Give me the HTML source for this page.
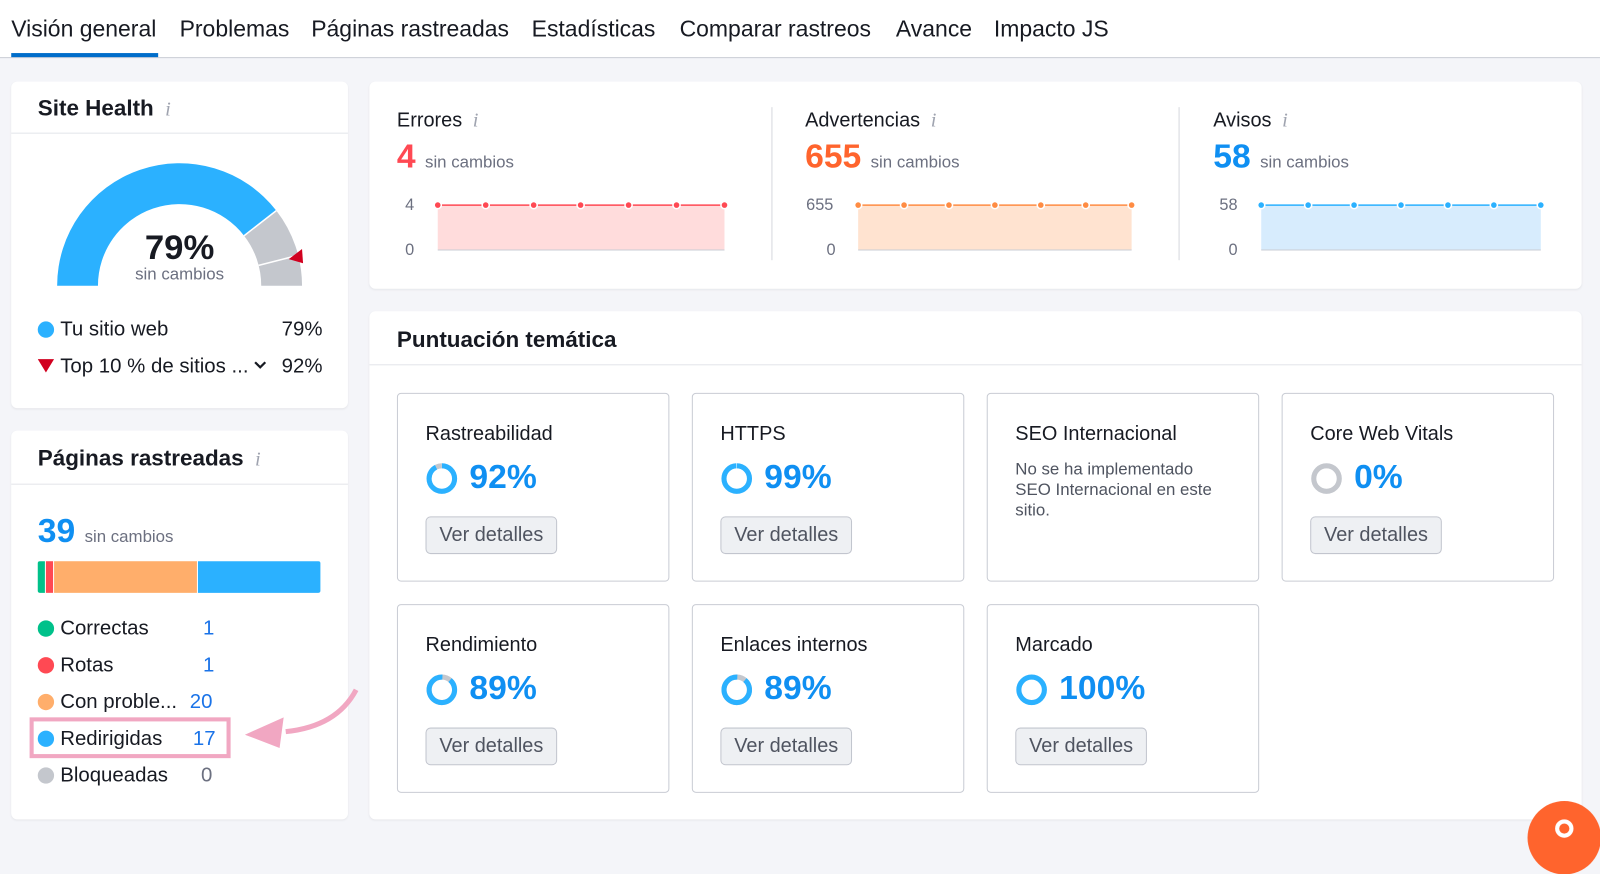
<!DOCTYPE html>
<html><head><meta charset="utf-8"><style>
*{box-sizing:border-box;margin:0;padding:0}
body{width:1600px;height:830px;background:#f4f5f9;font-family:"Liberation Sans",sans-serif;color:#171a22;position:relative;overflow:hidden}
#w{position:absolute;left:0;top:0;width:1568px;height:814px;transform:scale(1.0204);transform-origin:0 0}
.nav{position:absolute;left:0;top:0;width:1568px;height:57px;background:#fff;border-bottom:1px solid #c9ccd4}
.nav span{position:absolute;top:16px;font-size:22.5px;color:#171a22}
.card{position:absolute;background:#fff;border-radius:6px;box-shadow:0 1px 2px rgba(0,0,0,.06)}
.abs{position:absolute}
.h{font-weight:bold;font-size:22px}
.i{font-family:"Liberation Serif",serif;font-style:italic;color:#a0a4b0;font-size:20px;font-weight:normal}
.dot{position:absolute;width:16px;height:16px;border-radius:50%}
.lg{position:absolute;font-size:20px}
.num{position:absolute;font-size:20px;color:#1a73e8}
.tile{position:absolute;width:267px;height:185px;border:1.5px solid #c9ccd4;border-radius:4px}
.tile .t{position:absolute;left:27px;top:28px;font-size:19.5px}
.tile .p{position:absolute;left:70px;top:62px;font-size:33px;font-weight:bold;color:#0f8ff2}
.tile svg{position:absolute;left:27px;top:67px}
.btn{position:absolute;left:27px;top:120px;width:129px;height:37px;border:1px solid #c2c5ce;border-radius:5px;background:#eef0f3;font-size:19.5px;color:#4f5460;text-align:center;line-height:35px}
.sm{font-size:16.5px;color:#6c7080}
</style></head><body><div id="w">
<div class="nav">
<span style="left:11px">Visión general</span>
<span style="left:176px">Problemas</span>
<span style="left:305px">Páginas rastreadas</span>
<span style="left:521px">Estadísticas</span>
<span style="left:666px">Comparar rastreos</span>
<span style="left:878px">Avance</span>
<span style="left:974px">Impacto JS</span>
<div class="abs" style="left:11px;top:52px;width:144px;height:4px;background:#006dca"></div>
</div>

<div class="card" style="left:11px;top:80px;width:330px;height:320px">
<div class="abs h" style="left:26px;top:13px">Site Health <span class="i">&nbsp;i</span></div>
<div class="abs" style="left:0;top:50px;width:330px;height:1px;background:#e3e5ea"></div>
</div>
<svg class="abs" style="left:0;top:0" width="340" height="300">
<path d="M56 280 A120 120 0 0 1 270.8 206.4 L239.2 231 A80 80 0 0 0 96 280 Z" fill="#2bb1ff"/>
<path d="M270.8 206.4 A120 120 0 0 1 296 280 L256 280 A80 80 0 0 0 239.2 231 Z" fill="#c4c7cd"/>
<line x1="270.8" y1="206.4" x2="239.2" y2="231" stroke="#fff" stroke-width="1.5"/>
<line x1="292.3" y1="250.1" x2="253.5" y2="260.1" stroke="#fff" stroke-width="1.5"/>
<path d="M296 244 L297 258 L283 254 Z" fill="#d1001f"/>
</svg>
<div class="abs" style="left:0;top:224px;width:352px;text-align:center;font-size:34px;font-weight:bold">79%</div>
<div class="abs" style="left:0;top:260px;width:352px;text-align:center;font-size:16.5px;color:#6c7080">sin cambios</div>
<div class="dot" style="left:37px;top:315px;background:#2bb1ff"></div>
<div class="lg" style="left:59px;top:312px">Tu sitio web</div>
<div class="lg" style="left:276px;top:312px">79%</div>
<svg class="abs" style="left:37px;top:351px" width="16" height="14"><path d="M0 1 H16 L8 14 Z" fill="#d1001f"/></svg>
<div class="lg" style="left:59px;top:348px">Top 10 % de sitios ...</div>
<svg class="abs" style="left:248px;top:353px" width="14" height="10"><path d="M2 2 L7 7 L12 2" stroke="#171a22" stroke-width="2.2" fill="none"/></svg>
<div class="lg" style="left:276px;top:348px">92%</div>

<div class="card" style="left:11px;top:422px;width:330px;height:381px">
<div class="abs h" style="left:26px;top:14px">Páginas rastreadas <span class="i">&nbsp;i</span></div>
<div class="abs" style="left:0;top:52px;width:330px;height:1px;background:#e3e5ea"></div>
</div>
<div class="abs" style="left:37px;top:501px;font-size:33px;font-weight:bold;color:#0f8ff2">39 <span class="sm" style="font-weight:normal">sin cambios</span></div>
<div class="abs" style="left:37px;top:550px;width:7px;height:31px;background:#00c18a;border-radius:2px 0 0 2px"></div>
<div class="abs" style="left:45px;top:550px;width:7px;height:31px;background:#ff4953"></div>
<div class="abs" style="left:53px;top:550px;width:140px;height:31px;background:#ffae6b"></div>
<div class="abs" style="left:194px;top:550px;width:120px;height:31px;background:#2bb1ff;border-radius:0 2px 2px 0"></div>
<div class="dot" style="left:37px;top:608px;background:#00c18a"></div><div class="lg" style="left:59px;top:605px">Correctas</div><div class="num" style="left:199px;top:605px">1</div>
<div class="dot" style="left:37px;top:644px;background:#ff4953"></div><div class="lg" style="left:59px;top:641px">Rotas</div><div class="num" style="left:199px;top:641px">1</div>
<div class="dot" style="left:37px;top:680px;background:#ffae6b"></div><div class="lg" style="left:59px;top:677px">Con proble...</div><div class="num" style="left:186px;top:677px">20</div>
<div class="dot" style="left:37px;top:716px;background:#2bb1ff"></div><div class="lg" style="left:59px;top:713px">Redirigidas</div><div class="num" style="left:189px;top:713px">17</div>
<div class="dot" style="left:37px;top:752px;background:#c4c7cd"></div><div class="lg" style="left:59px;top:749px">Bloqueadas</div><div class="lg" style="left:197px;top:749px;color:#6c7080">0</div>
<div class="abs" style="left:29px;top:703px;width:197px;height:40px;border:4px solid #f1a7c2"></div>
<svg class="abs" style="left:230px;top:670px" width="130" height="70"><path d="M119 6 Q100 42 50 47" stroke="#f1a7c2" stroke-width="5" fill="none"/><path d="M10 50 L48 33 L44 63 Z" fill="#f1a7c2"/></svg>

<div class="card" style="left:362px;top:80px;width:1188px;height:203px"></div>
<div class="abs" style="left:756px;top:105px;width:1px;height:150px;background:#d6d8de"></div>
<div class="abs" style="left:1155px;top:105px;width:1px;height:150px;background:#d6d8de"></div>
<svg class="abs" style="left:380px;top:180px" width="1170" height="80" font-family="Liberation Sans" font-size="16" fill="#6c7080">
<g><text x="17" y="26">4</text><text x="17" y="70">0</text>
<rect x="49" y="21" width="281" height="44" fill="#ffdcdc"/><line x1="49" y1="21" x2="330" y2="21" stroke="#ff4953" stroke-width="1.5"/><line x1="49" y1="65" x2="330" y2="65" stroke="#c9ccd4"/>
<g fill="#ff4953" stroke="#fff" stroke-width="1.5"><circle cx="49" cy="21" r="3.5"/><circle cx="96" cy="21" r="3.5"/><circle cx="143" cy="21" r="3.5"/><circle cx="189" cy="21" r="3.5"/><circle cx="236" cy="21" r="3.5"/><circle cx="283" cy="21" r="3.5"/><circle cx="330" cy="21" r="3.5"/></g></g>
<g transform="translate(412,0)"><text x="-2" y="26">655</text><text x="18" y="70">0</text>
<rect x="49" y="21" width="268" height="44" fill="#ffe3d0"/><line x1="49" y1="21" x2="317" y2="21" stroke="#ff8c43" stroke-width="1.5"/><line x1="49" y1="65" x2="317" y2="65" stroke="#c9ccd4"/>
<g fill="#ff8c43" stroke="#fff" stroke-width="1.5"><circle cx="49" cy="21" r="3.5"/><circle cx="94" cy="21" r="3.5"/><circle cx="138" cy="21" r="3.5"/><circle cx="183" cy="21" r="3.5"/><circle cx="228" cy="21" r="3.5"/><circle cx="272" cy="21" r="3.5"/><circle cx="317" cy="21" r="3.5"/></g></g>
<g transform="translate(807,0)"><text x="8" y="26">58</text><text x="17" y="70">0</text>
<rect x="49" y="21" width="274" height="44" fill="#d7ecfd"/><line x1="49" y1="21" x2="323" y2="21" stroke="#2bb1ff" stroke-width="1.5"/><line x1="49" y1="65" x2="323" y2="65" stroke="#c9ccd4"/>
<g fill="#2bb1ff" stroke="#fff" stroke-width="1.5"><circle cx="49" cy="21" r="3.5"/><circle cx="95" cy="21" r="3.5"/><circle cx="140" cy="21" r="3.5"/><circle cx="186" cy="21" r="3.5"/><circle cx="232" cy="21" r="3.5"/><circle cx="277" cy="21" r="3.5"/><circle cx="323" cy="21" r="3.5"/></g></g>
</svg>
<div class="abs" style="left:389px;top:107px;font-size:19.5px">Errores <span class="i">&nbsp;i</span></div>
<div class="abs" style="left:389px;top:134px;font-size:33px;font-weight:bold;color:#ff4953">4 <span class="sm" style="font-weight:normal">sin cambios</span></div>
<div class="abs" style="left:789px;top:107px;font-size:19.5px">Advertencias <span class="i">&nbsp;i</span></div>
<div class="abs" style="left:789px;top:134px;font-size:33px;font-weight:bold;color:#ff642d">655 <span class="sm" style="font-weight:normal">sin cambios</span></div>
<div class="abs" style="left:1189px;top:107px;font-size:19.5px">Avisos <span class="i">&nbsp;i</span></div>
<div class="abs" style="left:1189px;top:134px;font-size:33px;font-weight:bold;color:#0f8ff2">58 <span class="sm" style="font-weight:normal">sin cambios</span></div>

<div class="card" style="left:362px;top:305px;width:1188px;height:498px">
<div class="abs h" style="left:27px;top:15px">Puntuación temática</div>
<div class="abs" style="left:0;top:52px;width:1188px;height:1px;background:#e3e5ea"></div>
</div>

<div class="tile" style="left:389px;top:385px"><div class="t">Rastreabilidad</div>
<svg width="32" height="32" viewBox="0 0 32 32"><circle cx="16" cy="16" r="12.5" fill="none" stroke="#2bb1ff" stroke-width="5" stroke-dasharray="72.3 78.5" transform="rotate(-90 16 16)"/><circle cx="16" cy="16" r="12.5" fill="none" stroke="#c4c7cd" stroke-width="5" stroke-dasharray="0 72.3 6.2 0" transform="rotate(-90 16 16)"/></svg>
<div class="p">92%</div><div class="btn">Ver detalles</div></div>
<div class="tile" style="left:678px;top:385px"><div class="t">HTTPS</div>
<svg width="32" height="32" viewBox="0 0 32 32"><circle cx="16" cy="16" r="12.5" fill="none" stroke="#2bb1ff" stroke-width="5" stroke-dasharray="77.5 78.5" transform="rotate(-90 16 16)"/></svg>
<div class="p">99%</div><div class="btn">Ver detalles</div></div>
<div class="tile" style="left:967px;top:385px"><div class="t">SEO Internacional</div>
<div class="abs" style="left:27px;top:64px;font-size:16.5px;color:#4f5460;line-height:20px;width:200px">No se ha implementado SEO Internacional en este sitio.</div></div>
<div class="tile" style="left:1256px;top:385px"><div class="t">Core Web Vitals</div>
<svg width="32" height="32" viewBox="0 0 32 32"><circle cx="16" cy="16" r="12.5" fill="none" stroke="#c4c7cd" stroke-width="5"/></svg>
<div class="p">0%</div><div class="btn">Ver detalles</div></div>

<div class="tile" style="left:389px;top:592px"><div class="t">Rendimiento</div>
<svg width="32" height="32" viewBox="0 0 32 32"><circle cx="16" cy="16" r="12.5" fill="none" stroke="#c4c7cd" stroke-width="5"/><circle cx="16" cy="16" r="12.5" fill="none" stroke="#2bb1ff" stroke-width="5" stroke-dasharray="69.9 78.5" transform="rotate(-50 16 16)"/></svg>
<div class="p">89%</div><div class="btn">Ver detalles</div></div>
<div class="tile" style="left:678px;top:592px"><div class="t">Enlaces internos</div>
<svg width="32" height="32" viewBox="0 0 32 32"><circle cx="16" cy="16" r="12.5" fill="none" stroke="#c4c7cd" stroke-width="5"/><circle cx="16" cy="16" r="12.5" fill="none" stroke="#2bb1ff" stroke-width="5" stroke-dasharray="69.9 78.5" transform="rotate(-50 16 16)"/></svg>
<div class="p">89%</div><div class="btn">Ver detalles</div></div>
<div class="tile" style="left:967px;top:592px"><div class="t">Marcado</div>
<svg width="32" height="32" viewBox="0 0 32 32"><circle cx="16" cy="16" r="12.5" fill="none" stroke="#2bb1ff" stroke-width="5"/></svg>
<div class="p">100%</div><div class="btn">Ver detalles</div></div>

<div class="abs" style="left:1497px;top:785px;width:72px;height:72px;border-radius:50%;background:#ff642d"></div>
<div class="abs" style="left:1524px;top:803px;width:18px;height:18px;border:4px solid #fff;border-radius:50%"></div>
</div></body></html>
